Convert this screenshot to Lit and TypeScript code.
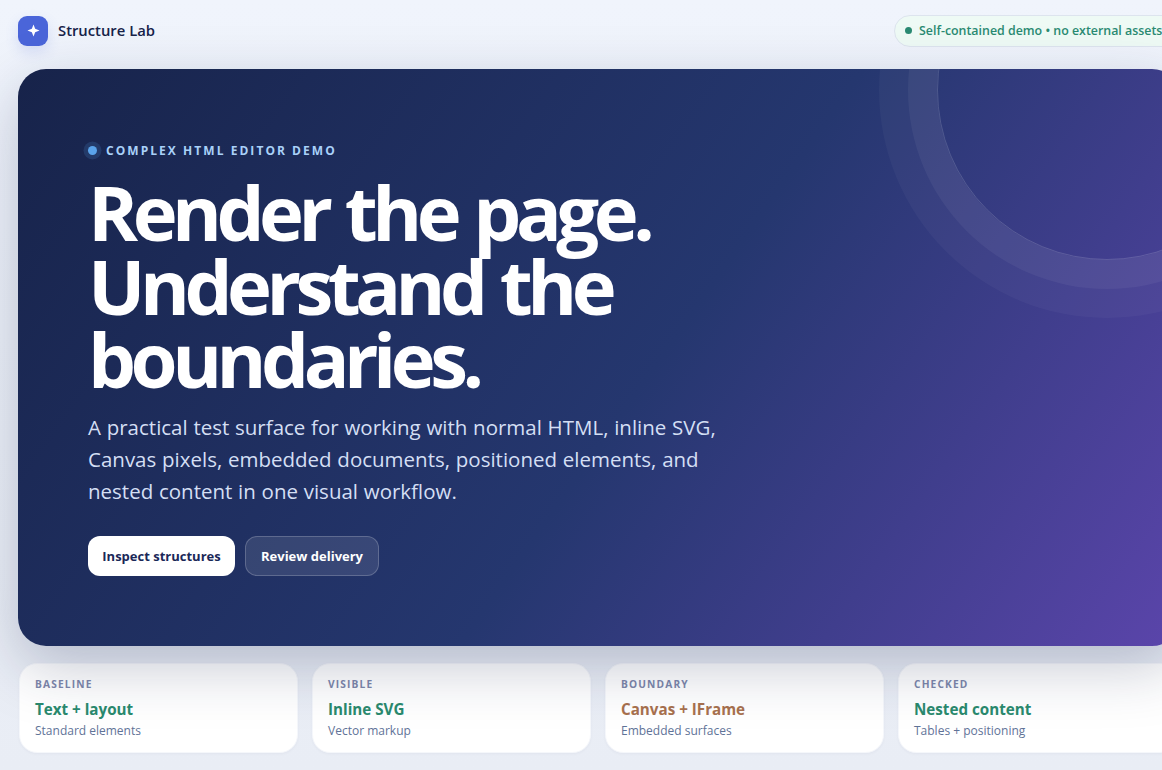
import { LitElement, html, css } from "lit";
import { customElement } from "lit/decorators.js";

const cards = [
  { k: "BASELINE", t: "Text + layout", s: "Standard elements", warm: false },
  { k: "VISIBLE", t: "Inline SVG", s: "Vector markup", warm: false },
  { k: "BOUNDARY", t: "Canvas + IFrame", s: "Embedded surfaces", warm: true },
  { k: "CHECKED", t: "Nested content", s: "Tables + positioning", warm: false },
];

@customElement("app-root")
export class AppRoot extends LitElement {
  static styles = css`
    :host {
      display: block;
      width: 1162px;
      height: 770px;
      overflow: hidden;
      font-family: "Open Sans", "Noto Sans", sans-serif;
      background: linear-gradient(180deg, #f0f4fc 0%, #e9edf5 100%);
    }
    .page {
      width: 1162px;
      padding: 14px 0 0 18px;
      display: flex;
      flex-direction: column;
    }
    .top {
      width: 1162px;
      height: 33px;
      display: flex;
      align-items: center;
      justify-content: space-between;
      margin-bottom: 22px;
    }
    .brand { display: flex; align-items: center; gap: 10px; }
    .logo {
      width: 30px;
      height: 30px;
      border-radius: 9px;
      background: #4a65d9;
      box-shadow: 0 6px 14px rgba(74, 103, 220, 0.16);
      display: flex;
      align-items: center;
      justify-content: center;
    }
    .name { font-size: 14.8px; font-weight: 600; color: #17234a; padding-bottom: 2px; }
    .pill {
      flex: none;
      height: 32px;
      box-sizing: border-box;
      width: 286px;
      display: flex;
      align-items: center;
      gap: 7px;
      padding: 0 10px;
      border-radius: 16px;
      border: 1px solid #dde4ee;
      background: #eefaf5;
      color: #2a8a72;
      font-size: 12.4px;
      font-weight: 600;
      white-space: nowrap;
    }
    .pill i { width: 7px; height: 7px; border-radius: 50%; background: #2a8a72; flex: none; }
    .hero {
      position: relative;
      width: 1162px;
      height: 577px;
      box-sizing: border-box;
      padding: 72px 70px 0;
      border-radius: 28px;
      overflow: hidden;
      background: linear-gradient(125deg, #17234a 0%, #25376f 54%, #5b45ab 100%);
    }
    .shadow {
      position: relative;
      z-index: 1;
      width: 1162px;
      border-radius: 28px;
      box-shadow: 0 20px 60px rgba(23, 35, 74, 0.25);
      margin-bottom: 17px;
    }
    .ring {
      position: absolute;
      left: 918.5px;
      top: -149px;
      width: 340px;
      height: 340px;
      box-sizing: border-box;
      border-radius: 50%;
      border: 1px solid rgba(255, 255, 255, 0.16);
      box-shadow: 0 0 0 29px rgba(255, 255, 255, 0.05), 0 0 0 58px rgba(255, 255, 255, 0.035);
    }
    .eyebrow {
      display: flex;
      align-items: center;
      gap: 5px;
      margin-left: -5px;
      height: 18px;
      color: #a9d1f9;
      font-size: 12px;
      font-weight: 700;
      letter-spacing: 2.05px;
      white-space: nowrap;
    }
    .eyebrow i {
      width: 9px;
      height: 9px;
      margin: 0 4.5px;
      border-radius: 50%;
      background: #5aa3ea;
      box-shadow: 0 0 0 4.5px rgba(95, 169, 238, 0.16);
      flex: none;
    }
    h1 {
      margin: 16px 0 0;
      font-size: 76px;
      line-height: 73.5px;
      font-weight: 700;
      letter-spacing: -5.5px;
      word-spacing: 3px;
      color: #fff;
    }
    p {
      margin: 15.5px 0 0;
      width: 680px;
      font-size: 20.5px;
      word-spacing: 0.4px;
      line-height: 32px;
      color: #d4dff4;
    }
    .actions { display: flex; gap: 10px; margin-top: 29px; }
    .btn {
      height: 40px;
      box-sizing: border-box;
      display: flex;
      align-items: center;
      justify-content: center;
      border-radius: 12px;
      font-size: 13px;
      font-weight: 700;
    }
    .primary { width: 147px; background: #fff; color: #1a2858; }
    .secondary {
      width: 134px;
      color: #fff;
      background: rgba(255, 255, 255, 0.1);
      border: 1px solid rgba(255, 255, 255, 0.2);
    }
    .cards {
      width: 1158px;
      margin-left: 1px;
      display: grid;
      grid-template-columns: repeat(4, 1fr);
      gap: 14px;
    }
    .card {
      height: 90px;
      box-sizing: border-box;
      padding: 13px 15px 0;
      border-radius: 18px;
      background: #fff;
      border: 1px solid #f5f7fb;
      box-shadow: 0 1px 3px rgba(23, 35, 74, 0.04);
    }
    .k { font-size: 10.2px; line-height: 14px; font-weight: 700; letter-spacing: 1.15px; color: #7d87ab; }
    .t { margin-top: 8px; font-size: 15.2px; line-height: 21px; font-weight: 700; color: #2a8a6e; }
    .t.warm { color: #a8714e; }
    .s { margin-top: 2px; font-size: 12px; line-height: 17px; color: #5f7398; }
  `;

  render() {
    return html`
      <div class="page">
        <div class="top">
          <div class="brand">
            <div class="logo">
              <svg width="13" height="13" viewBox="0 0 14 14" aria-hidden="true">
                <path d="M7 0.5 L8.8 5.2 L13.5 7 L8.8 8.8 L7 13.5 L5.2 8.8 L0.5 7 L5.2 5.2 Z" fill="#fff" />
              </svg>
            </div>
            <div class="name">Structure Lab</div>
          </div>
          <div class="pill"><i></i>Self-contained demo • no external assets</div>
        </div>
        <div class="shadow">
          <section class="hero">
            <div class="ring"></div>
            <div class="eyebrow"><i></i>COMPLEX HTML EDITOR DEMO</div>
            <h1>Render the page.<br />Understand the<br />boundaries.</h1>
            <p>A practical test surface for working with normal HTML, inline SVG, Canvas pixels, embedded documents, positioned elements, and nested content in one visual workflow.</p>
            <div class="actions">
              <div class="btn primary">Inspect structures</div>
              <div class="btn secondary">Review delivery</div>
            </div>
          </section>
        </div>
        <div class="cards">
          ${cards.map(
            (c) => html`<div class="card">
              <div class="k">${c.k}</div>
              <div class="t ${c.warm ? "warm" : ""}">${c.t}</div>
              <div class="s">${c.s}</div>
            </div>`
          )}
        </div>
      </div>
    `;
  }
}
